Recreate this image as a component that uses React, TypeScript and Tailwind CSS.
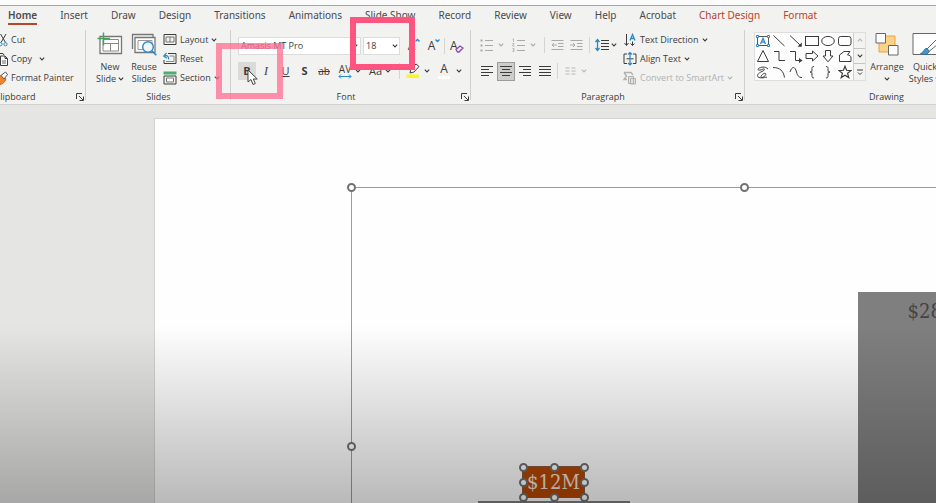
import React from 'react';
import clsx from 'clsx';

const TABS = [
  'Home', 'Insert', 'Draw', 'Design', 'Transitions', 'Animations', 'Slide Show',
  'Record', 'Review', 'View', 'Help', 'Acrobat', 'Chart Design', 'Format',
];
const CONTEXT_TABS = ['Chart Design', 'Format'];

const Chevron = ({ className = '' }: { className?: string }) => (
  <svg viewBox="0 0 6 4" className={clsx('w-[6px] h-1 shrink-0', className)} fill="none" stroke="currentColor" strokeWidth="1.1">
    <path d="M0.8 0.7 3 2.9 5.2 0.7" />
  </svg>
);

const Divider = () => <div className="w-px h-4 bg-[#d4d4d3] shrink-0" />;

type IconProps = { children: React.ReactNode; w?: number; h?: number; className?: string };
const Icon = ({ children, w = 14, h = 14, className = '' }: IconProps) => (
  <svg viewBox={`0 0 ${w} ${h}`} width={w} height={h} fill="none" stroke="currentColor" strokeWidth="1" className={clsx('shrink-0', className)}>
    {children}
  </svg>
);

type GroupProps = { label: string; className: string; launcher?: boolean; children: React.ReactNode };
const Group = ({ label, className, launcher, children }: GroupProps) => (
  <section aria-label={label} className={clsx('relative flex flex-col shrink-0', className)}>
    <div className="h-[60px] flex">{children}</div>
    <div className="h-[14px] flex items-center">
      <span className="flex-1 text-center">{label}</span>
      {launcher && (
        <button aria-label={`${label} options`} className="w-[10px] h-2 flex">
          <Icon w={8} h={8}>
            <path d="M0.5 6V0.5H6M3 3l4 4M7.5 3.5v4h-4" />
          </Icon>
        </button>
      )}
    </div>
    <div className="absolute right-0 top-0 h-[70px] w-px bg-[#cfcfce]" />
  </section>
);

type SmallProps = { icon: React.ReactNode; label: string; menu?: boolean; wide?: boolean; disabled?: boolean };
const Small = ({ icon, label, menu, wide, disabled }: SmallProps) => (
  <button disabled={disabled} className={clsx('h-[19px] flex items-center gap-[3px] whitespace-nowrap', disabled && 'text-[#b1b1b0]')}>
    {icon}
    <span>{label}</span>
    {menu && <Chevron className={wide ? 'ml-1' : ''} />}
  </button>
);

const Lines = ({ rows }: { rows: number[][] }) => (
  <Icon w={12} h={14}>
    {rows.map(([a, b], i) => (
      <path key={i} d={`M${a} ${2.5 + i * 3}H${b}`} />
    ))}
  </Icon>
);

const SHAPES: { name: string; art: React.ReactNode }[] = [
  {
    name: 'Text box',
    art: (
      <g stroke="#2b88c8">
        <rect x="1.5" y="2.5" width="11" height="9" stroke="#555" />
        <path d="M0.5 1.5h2v2h-2zM11.5 1.5h2v2h-2zM0.5 10.5h2v2h-2zM11.5 10.5h2v2h-2z" fill="#fff" />
        <path d="M4.5 10 7 4.3 9.5 10M5.4 8.2h3.2" strokeWidth="1.3" />
      </g>
    ),
  },
  { name: 'Line', art: <path d="M1.5 1.5 12.5 12" /> },
  { name: 'Arrow', art: <><path d="M1 1.5 12 12" /><path d="M12.8 8.5v4.3H8.5z" fill="currentColor" stroke="none" /></> },
  { name: 'Rectangle', art: <rect x="0.5" y="2.5" width="13" height="9" /> },
  { name: 'Oval', art: <ellipse cx="7" cy="7" rx="6.3" ry="4.6" /> },
  { name: 'Rounded rectangle', art: <rect x="0.5" y="2.5" width="12.5" height="9" rx="2.2" /> },
  { name: 'Triangle', art: <path d="M7 1.5 12.5 12.5H1.5Z" /> },
  { name: 'Elbow', art: <path d="M2 2.5h5v9h6" /> },
  { name: 'Elbow arrow', art: <><path d="M1 2.5h5.5v9H11" /><path d="M10 9l3.5 2.5L10 14z" fill="currentColor" stroke="none" /></> },
  { name: 'Right arrow', art: <path d="M1 4.5h6.5V2l5.5 5-5.5 5V9.5H1z" /> },
  { name: 'Down arrow', art: <path d="M4.5 1.5h5V7H12l-5 5.8L2 7h2.5z" /> },
  { name: 'Freeform', art: <path d="M1.5 6 6 2.5h6L9.5 6c2 0 3.500.8 3.500 3v3.500H1.500z" /> },
  { name: 'Scribble', art: <path d="M12 4C9 1 5 2 2.5 3.5c-2 2 2 2 4 .8C9 3 9.5 5 6 6.5 2 8 0 11 3 12.5c4 1.500 8-3 6.500-4C7.500 7.500 3 12 6 12.800c2 .4 3-.8 5-.6" /> },
  { name: 'Arc', art: <path d="M1 2.5c7 0 10.500 3.500 11.500 10" /> },
  { name: 'Curve', art: <path d="M1 7c2-6 5-6 6.500 0 1 4 2.500 5.500 5.500 5.500" /> },
  { name: 'Left brace', art: <path d="M9 1.500C6.500 1.500 7 3 7 5S6.500 7 5 7c1.500 0 2 0 2 2s-.5 4 2 4" /> },
  { name: 'Right brace', art: <path d="M5 1.500C7.500 1.500 7 3 7 5s.5 2 2 2c-1.500 0-2 0-2 2s.5 4-2 4" /> },
  { name: 'Star', art: <path d="M7 1.300 8.600 5.300l4.400.3-3.400 2.700 1.200 4.300L7 10.200l-3.800 2.400 1.200-4.300L1 5.600l4.400-.3z" strokeWidth="1.200" /> },
];

const Clipboard = () => (
  <Group label="Clipboard" launcher className="w-[132px] -ml-[46px]">
    <div className="flex flex-col items-start pl-[40px]">
      <Small
        label="Cut"
        icon={
          <Icon>
            <path d="M6.500 1l5 8.500M12 1 7 9.500" />
            <circle cx="6.500" cy="11.200" r="1.600" stroke="#2b88c8" />
            <circle cx="11.500" cy="11.200" r="1.600" stroke="#2b88c8" />
          </Icon>
        }
      />
      <Small
        label="Copy"
        menu
        wide
        icon={
          <Icon>
            <path d="M5 10.500H2.500v-9H9L10 3" />
            <path d="M6.500 4h4.500l2.500 2.500v7h-7zM11 4v2.500h2.500" fill="#fff" />
            <path d="M8 9h4M8 11h4" strokeWidth=".8" />
          </Icon>
        }
      />
      <Small
        label="Format Painter"
        icon={
          <Icon>
            <path d="M4 5c2 .5 4-1 5-1l3 4c-1 3-3 5-6 5.500z" fill="#ed8733" stroke="#d26a1d" />
            <path d="M7 4.500 11.500 1l2 2.500L10 8z" fill="#fff" stroke="#555" />
          </Icon>
        }
      />
    </div>
  </Group>
);

const Slides = () => (
  <Group label="Slides" className="w-[145px]">
    <div className="flex w-full pl-2">
      <button className="w-8 pt-[2px] flex flex-col items-center leading-3">
        <Icon w={26} h={24} className="mb-[5px]">
          <path d="M3 4.500h21.500v17H3z" fill="#fff" stroke="#777" strokeWidth="1.300" />
          <path d="M6 7.500h15.500v11.500H6zM6 11.500h15.500M13.500 11.500v7.500" stroke="#888" />
          <path d="M6.500 0.500v13M0.500 6.500h12.500" stroke="#3aa757" strokeWidth="1.400" />
        </Icon>
        New
        <span className="flex items-center gap-[2px]">Slide <Chevron /></span>
      </button>
      <button className="ml-[2px] w-8 pt-[2px] flex flex-col items-center leading-3">
        <Icon w={26} h={24} className="mb-[5px]">
          <path d="M1.500 17V2.500h20.500V5" stroke="#777" strokeWidth="1.300" />
          <path d="M4 5.500h20v15H4z" fill="#fff" stroke="#777" strokeWidth="1.300" />
          <path d="M7 8.500h14v9H7z" stroke="#999" />
          <circle cx="17" cy="15" r="5.300" fill="#eef6fb" stroke="#2b88c8" strokeWidth="1.400" />
          <path d="m20.800 18.800 4.500 4.500" stroke="#2b88c8" strokeWidth="1.600" />
        </Icon>
        Reuse
        <span>Slides</span>
      </button>
      <div className="ml-[3px] flex flex-col items-start">
        <Small
          label="Layout"
          menu
          icon={
            <Icon>
              <path d="M1 1.500h12v10H1z" />
              <path d="M3 4h8v5H3zM7 4v5" stroke="#777" />
            </Icon>
          }
        />
        <Small
          label="Reset"
          icon={
            <Icon>
              <path d="M5 1.500h8v10H1V8" />
              <path d="M6.500 4H11v5.500H3" stroke="#888" />
              <path d="M1.500 4c2.500-1 4 0 4.300 3.500M3.500 1 .8 4l3 2.300" stroke="#2b88c8" strokeWidth="1.200" />
            </Icon>
          }
        />
        <Small
          label="Section"
          menu
          icon={
            <Icon>
              <path d="M0.500 0.500h13v3h-13z" fill="#4fad6b" stroke="none" />
              <path d="M1 5h12v8H1z" />
              <path d="M3.500 7h7v4h-7z" fill="#fff" stroke="#777" />
            </Icon>
          }
        />
      </div>
    </div>
  </Group>
);

const selectBox = 'appearance-none h-[18px] pl-[2px] bg-white border border-[#dcdcdb] outline-none';

const FontGroup = () => (
  <Group label="Font" launcher className="w-[240px]">
    <div className="flex flex-col w-full pl-[7px] pt-[7px]">
      <div className="flex items-center h-[18px]">
        <label className="relative">
          <select aria-label="Font name" className={clsx(selectBox, 'w-[123px]')}>
            <option>Amasis MT Pro</option>
          </select>
          <Chevron className="absolute right-[3px] top-[7px]" />
        </label>
        <label className="relative ml-[2px]">
          <select aria-label="Font size" className={clsx(selectBox, 'w-[37px]')}>
            <option>18</option>
          </select>
          <Chevron className="absolute right-[2px] top-[7px]" />
        </label>
        <button aria-label="Increase font size" className="w-5 ml-1 flex justify-center text-xs leading-4">
          A<Icon w={5} h={5}><path d="M0.500 3.500 2.500 1.500l2 2" stroke="#2b88c8" strokeWidth="1.300" /></Icon>
        </button>
        <button aria-label="Decrease font size" className="w-5 flex justify-center text-xs leading-4">
          A<Icon w={5} h={5}><path d="M0.500 1.500 2.500 3.500l2-2" stroke="#2b88c8" strokeWidth="1.300" /></Icon>
        </button>
        <Divider />
        <button aria-label="Clear formatting" className="ml-[5px] relative w-[14px] text-left text-xs leading-4">
          A
          <Icon w={9} h={8} className="absolute left-[5px] top-[7px]">
            <path d="M1 4.500 5 1l3 2-4 4H2.500z" fill="#f3e8f6" stroke="#8f4ba6" strokeWidth="1.300" />
          </Icon>
        </button>
      </div>
      <div className="flex items-center h-[18px] mt-[7px] text-[11px]">
        <button aria-label="Bold" className="w-[18px] h-[18px] bg-[#dadad9] font-bold">B</button>
        <button aria-label="Italic" className="w-5 italic font-['Liberation_Serif',serif] text-xs">I</button>
        <button aria-label="Underline" className="w-[19px] underline">U</button>
        <button aria-label="Shadow" className="w-[19px] font-bold">S</button>
        <button aria-label="Strikethrough" className="w-[20px] line-through text-[10px]">ab</button>
        <button aria-label="Character spacing" className="ml-1 flex items-center gap-[3px]">
          <span className="relative w-[14px] h-4 text-[10px] leading-3">
            AV
            <Icon w={14} h={5} className="absolute left-0 top-[11px]">
              <path d="M1 2.500h12M3 0.500l-2 2 2 2M11 0.500l2 2-2 2" stroke="#2b88c8" />
            </Icon>
          </span>
          <Chevron />
        </button>
        <button aria-label="Change case" className="ml-2 flex items-center gap-[3px]">
          Aa <Chevron />
        </button>
        <div className="ml-2"><Divider /></div>
        <button aria-label="Highlight color" className="ml-[6px] flex items-center gap-1">
          <Icon w={14} h={16}>
            <path d="M4 10 5 6l5-5 3 2.500L8 9l-4 1z" fill="#fff" />
            <path d="M0.500 11.500h12.500v3.500H.5z" fill="#fdf51c" stroke="none" />
          </Icon>
          <Chevron />
        </button>
        <button aria-label="Font color" className="ml-2 flex items-center gap-[6px]">
          <span className="w-[12px] h-[16px] border-b-[3px] border-white leading-3 text-xs">A</span>
          <Chevron />
        </button>
      </div>
    </div>
  </Group>
);

const Paragraph = () => (
  <Group label="Paragraph" launcher className="w-[274px]">
    <div className="flex flex-col w-[152px] pl-[9px] pt-[6px]">
      <div className="flex items-center h-[18px]">
        <button disabled aria-label="Bullets" className="flex items-center gap-1 text-[#a9a9a8]">
          <Icon w={14} h={14}>
            <path d="M5 2.500h8M5 7.500h8M5 12.500h8" />
            <path d="M0.500 1.500h2v2h-2zM0.500 6.500h2v2h-2zM0.500 11.500h2v2h-2z" fill="currentColor" stroke="none" />
          </Icon>
          <Chevron />
        </button>
        <button disabled aria-label="Numbering" className="ml-2 flex items-center gap-1 text-[#a9a9a8]">
          <Icon w={14} h={14}>
            <path d="M5 2.500h8M5 7.500h8M5 12.500h8" />
            <path d="M0.500 1h1v3M0.500 5.500h1.500l-1.500 2.500h2M0.500 10.500h1.500v3H.5M.8 12H2" strokeWidth=".8" />
          </Icon>
          <Chevron />
        </button>
        <div className="ml-2"><Divider /></div>
        <button disabled aria-label="Decrease indent" className="ml-[6px] text-[#a9a9a8]">
          <Icon w={13} h={14}><path d="M0.500 2.500h12M7 5.500h5.500M7 8.500h5.500M0.500 11.500h12M6 7H1M3 5 1 7l2 2" /></Icon>
        </button>
        <button disabled aria-label="Increase indent" className="ml-[6px] text-[#a9a9a8]">
          <Icon w={13} h={14}><path d="M0.500 2.500h12M7 5.500h5.500M7 8.500h5.500M0.500 11.500h12M0 7h5M3 5l2 2-2 2" /></Icon>
        </button>
        <div className="ml-[6px]"><Divider /></div>
        <button aria-label="Line spacing" className="ml-[5px] flex items-center gap-[2px]">
          <Icon w={14} h={14}>
            <path d="M6 2.500h8M6 5.500h8M6 8.500h8M6 11.500h8" strokeWidth="1.200" />
            <path d="M2.500 1.500v11M.5 4l2-2.500L4.500 4M.5 10l2 2.500 2-2.500" stroke="#2b88c8" strokeWidth="1.300" />
          </Icon>
          <Chevron />
        </button>
      </div>
      <div className="flex items-center h-5 mt-[7px]">
        <button aria-label="Align left" className="w-[17px] flex pl-px"><Lines rows={[[0, 12], [0, 8], [0, 12], [0, 8]]} /></button>
        <button aria-label="Center" className="w-[18px] h-[19px] flex items-center justify-center bg-[#cdcdcc] border border-[#9c9c9b]">
          <Lines rows={[[0, 12], [2, 10], [0, 12], [2, 10]]} />
        </button>
        <button aria-label="Align right" className="ml-1 w-5 flex"><Lines rows={[[0, 12], [4, 12], [0, 12], [4, 12]]} /></button>
        <button aria-label="Justify" className="w-[18px] flex"><Lines rows={[[0, 12], [0, 12], [0, 12], [0, 12]]} /></button>
        <Divider />
        <button disabled aria-label="Columns" className="ml-[7px] flex items-center gap-[5px] text-[#b9b9b8]">
          <Icon w={11} h={14}><path d="M0.500 4h4M0.500 7h4M0.500 10h4M6.500 4h4M6.500 7h4M6.500 10h4" /></Icon>
          <Chevron />
        </button>
      </div>
    </div>
    <div className="flex flex-col items-start">
      <Small
        label="Text Direction"
        menu
        icon={
          <Icon>
            <path d="M3.500 1v11M1.500 10l2 2.500 2-2.500M9.500 8.500v4M7.500 10.500l2 2 2-2" />
            <path d="M7 7.500 9.500 1.500 12 7.500M8 5.500h3" stroke="#2b88c8" strokeWidth="1.300" />
          </Icon>
        }
      />
      <Small
        label="Align Text"
        menu
        icon={
          <Icon>
            <path d="M4 2H1v9.500h3M10 2h3v9.500h-3M3.500 6.800h7" />
            <path d="M7 .5v12.500M5 2.500l2-2 2 2M5 11l2 2 2-2" stroke="#2b88c8" strokeWidth="1.200" />
          </Icon>
        }
      />
      <Small
        label="Convert to SmartArt"
        menu
        disabled
        icon={
          <Icon>
            <path d="M1 1.500h7l2 2.500M1 1.500 3.500 5 1 8.500h3" strokeWidth="1.400" />
            <path d="M5.500 5.500h5v7h-5zM7.500 7.500h5v5.500h-5z" fill="#e2e2e1" />
          </Icon>
        }
      />
    </div>
  </Group>
);

const Drawing = () => (
  <Group label="Drawing" className="w-[283px]">
    <div className="flex pl-[9px] pt-[2px]">
      <div className="flex h-[49px] bg-[#fdfdfd] border border-[#dededd]">
        <div className="grid grid-cols-6 w-[98px]">
          {SHAPES.map((shape) => (
            <button key={shape.name} aria-label={shape.name} className="flex items-center justify-center">
              <Icon>{shape.art}</Icon>
            </button>
          ))}
        </div>
        <div className="w-3 grid grid-rows-3 bg-[#f3f3f2] border-l border-[#cfcfce] divide-y divide-[#c4c4c3]">
          <button aria-label="Scroll up" className="flex items-center justify-center text-[#b5b5b4]"><Chevron className="rotate-180" /></button>
          <button aria-label="Scroll down" className="flex items-center justify-center"><Chevron /></button>
          <button aria-label="More shapes" className="flex items-center justify-center">
            <Icon w={6} h={7}><path d="M0 1h6M1 3.500l2 2 2-2" /></Icon>
          </button>
        </div>
      </div>
      <button className="ml-[3px] w-9 flex flex-col items-center leading-3">
        <Icon w={24} h={24} className="mb-[5px]">
          <path d="M4 4h16v16H4z" fill="#fbd28a" stroke="#e8a33d" />
          <path d="M1 1.500h9.500V11H1zM13.500 13.500h9.500V23h-9.500z" fill="#fff" stroke="#666" />
        </Icon>
        Arrange
        <Chevron className="mt-1" />
      </button>
      <button className="ml-[2px] w-9 flex flex-col items-center leading-3">
        <Icon w={26} h={24} className="mb-[5px]">
          <path d="M1 1.500h24v21H1z" fill="#fff" stroke="#666" />
          <path d="M24 8 15 17l2 2.500L26 12z" fill="#fff" stroke="#666" />
          <path d="M15 16.500c-3-.5-3 4-6.500 5 3.500 1.500 8.500 1 8.500-2.500z" fill="#3d94d1" stroke="#2672ab" />
        </Icon>
        Quick
        <span className="flex items-center gap-[2px]">Styles <Chevron /></span>
      </button>
    </div>
  </Group>
);

const Handle = ({ className }: { className: string }) => (
  <span className={clsx('absolute w-[9px] h-[9px] -ml-1 -mt-1 rounded-full bg-white border-2 border-[#717171]', className)} />
);

const SlideCanvas = () => (
  <main className="relative flex-1 flex pl-[154px] pt-[13px] bg-[#e5e5e4] overflow-hidden">
    <div className="relative flex-1 bg-[#fefefe] border-l border-t border-[#d2d2d1] font-['DejaVu_Serif_Condensed','DejaVu_Serif',serif] text-[20px]">
      {/* chart object, runs past the window edge */}
      <div className="absolute left-[196px] top-[68px] -right-[200px] -bottom-[200px] border border-[#9b9b9b]" />
      <Handle className="left-[196px] top-[68px]" />
      <Handle className="left-[589px] top-[68px]" />
      <Handle className="left-[196px] top-[327px]" />

      <div className="absolute left-[703px] top-[173px] w-[152px] -bottom-10 bg-[#7f7f7f] pt-[5px] text-center leading-7 text-[#444]">$28M</div>
      <div className="absolute left-[323px] top-[382px] w-[152px] h-10 bg-[#7f7f7f]" />

      <div className="absolute left-[367px] top-[347px] w-[63px] h-[32px] bg-[#b84700] border border-[#8b5a3c] text-center leading-[30px] text-[#f3e4da]">
        $12M
        <Handle className="left-0 top-0" />
        <Handle className="left-1/2 top-0" />
        <Handle className="left-full top-0" />
        <Handle className="left-0 top-1/2" />
        <Handle className="left-full top-1/2" />
        <Handle className="left-0 top-full" />
        <Handle className="left-1/2 top-full" />
        <Handle className="left-full top-full" />
      </div>
    </div>
    <div className="absolute inset-x-0 bottom-0 h-[178px] bg-linear-to-b from-black/0 to-black/27 pointer-events-none" />
  </main>
);

export default function App() {
  return (
    <div className="relative min-h-screen flex flex-col overflow-hidden bg-[#f2f2f1] font-['Open_Sans','Noto_Sans',sans-serif] text-[9px] text-[#3c3c3c]">
      <header className="relative border-b border-[#d2d2d1]">
        <div className="h-[6px] bg-[#fbfbfb] border-b border-[#a5a5a4]" />
        <nav className="flex gap-[23px] pl-2 h-6 text-[10px] font-['Noto_Sans',sans-serif] whitespace-nowrap text-[#4a4a4a]">
          {TABS.map((tab) => (
            <button
              key={tab}
              className={clsx(
                'h-[19px] leading-4 border-b-2',
                tab === 'Home' ? 'border-[#b7472a] font-semibold' : 'border-transparent',
                CONTEXT_TABS.includes(tab) && 'text-[#b9412c]',
              )}
            >
              {tab}
            </button>
          ))}
        </nav>
        <div className="flex overflow-hidden">
          <Clipboard />
          <Slides />
          <FontGroup />
          <Paragraph />
          <Drawing />
        </div>
        {/* callout frames */}
        <div className="absolute left-[216px] top-[43px] w-[67px] h-[56px] border-6 border-[#ff6c92]/75 pointer-events-none" />
        <div className="absolute left-[350px] top-[17px] w-[65px] h-[53px] border-6 border-[#fd5580] pointer-events-none" />
        <svg viewBox="0 0 12 17" className="absolute left-[247px] top-[69px] w-3 h-[17px]" fill="#fff" stroke="#444" strokeWidth="1">
          <path d="M1 1v12l3-2.500 2 5 2.300-1-2-4.500h4z" />
        </svg>
      </header>
      <SlideCanvas />
    </div>
  );
}
